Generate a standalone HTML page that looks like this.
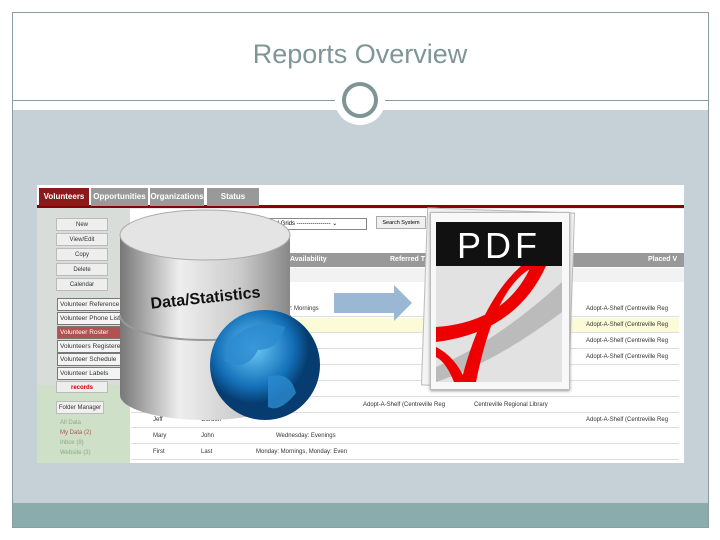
<!DOCTYPE html>
<html><head><style>
*{margin:0;padding:0;box-sizing:border-box}
body{width:720px;height:540px;background:#fff;position:relative;overflow:hidden;font-family:"Liberation Sans",sans-serif}
.a{position:absolute}
.btn{position:absolute;left:56px;width:52px;height:13px;background:#eee;border:1px solid #bbb;font-size:6px;text-align:center;line-height:12px;color:#333}
.menu{position:absolute;left:57px;width:66px;height:13px;background:#f4f4f4;border:1px solid #777;font-size:6.5px;line-height:12px;padding-left:2px;color:#333;white-space:nowrap;overflow:hidden}
.row{position:absolute;left:131px;width:548px;height:15px;border-bottom:1px solid #ddd;font-size:6px;line-height:15px;color:#333}
.row span{position:absolute}
</style></head><body>
<div class="a" style="left:12px;top:12px;width:697px;height:516px;border:1px solid #8a9e9e"></div>
<div class="a" style="left:13px;top:110px;width:695px;height:393px;background:#c6d1d7"></div>
<div class="a" style="left:13px;top:503px;width:695px;height:24px;background:#8aacac"></div>
<div class="a" style="left:13px;top:100px;width:695px;height:1px;background:#8a9e9e"></div>
<div class="a" style="left:0;top:39px;width:720px;text-align:center;font-size:27px;color:#7f9696">Reports Overview</div>
<div class="a" style="left:335px;top:77px;width:50px;height:48px;border-radius:50%;background:#fff"></div>
<div class="a" style="left:342px;top:82px;width:36px;height:36px;border-radius:50%;border:4px solid #7f9494;background:#fff"></div>

<div class="a" style="left:37px;top:185px;width:647px;height:278px;background:#fff;overflow:hidden">
 <div class="a" style="left:0;top:20px;width:647px;height:3px;background:#8b0000"></div>
 <div class="a" style="left:2px;top:3px;width:50px;height:18px;background:#8b1a1a;color:#fff;font-size:8px;font-weight:bold;line-height:18px;text-align:center">Volunteers</div>
 <div class="a" style="left:54px;top:3px;width:57px;height:18px;background:#999;color:#fff;font-size:8px;font-weight:bold;line-height:18px;text-align:center">Opportunities</div>
 <div class="a" style="left:113px;top:3px;width:54px;height:18px;background:#999;color:#fff;font-size:8px;font-weight:bold;line-height:18px;text-align:center">Organizations</div>
 <div class="a" style="left:170px;top:3px;width:52px;height:18px;background:#999;color:#fff;font-size:8px;font-weight:bold;line-height:18px;text-align:center">Status</div>
 <div class="a" style="left:0;top:23px;width:93px;height:255px;background:#d9ddd9"></div>
 <div class="a" style="left:0;top:200px;width:93px;height:78px;background:#cfe0c8"></div>
 <div class="a" style="left:93px;top:23px;width:554px;height:255px;background:#e8e8e8"></div>
</div>
<div class="btn" style="top:218px">New</div>
<div class="btn" style="top:233px">View/Edit</div>
<div class="btn" style="top:248px">Copy</div>
<div class="btn" style="top:263px">Delete</div>
<div class="btn" style="top:278px">Calendar</div>
<div class="menu" style="top:298px">Volunteer Reference</div>
<div class="menu" style="top:312px">Volunteer Phone List</div>
<div class="menu" style="top:326px;background:#b35050;color:#fff">Volunteer Roster</div>
<div class="menu" style="top:340px">Volunteers Registered</div>
<div class="menu" style="top:353px">Volunteer Schedule</div>
<div class="menu" style="top:367px">Volunteer Labels</div>
<div class="btn" style="top:381px;color:#c00;font-weight:bold;height:12px">records</div>
<div class="btn" style="top:401px;left:56px;width:48px;height:13px;background:#f0f0f0">Folder Manager</div>
<div class="a" style="left:60px;top:418px;font-size:6px;color:#8a8;line-height:10px">All Data<br><span style="color:#a55">My Data (2)</span><br>Inbox (8)<br>Website (3)</div>
<div class="a" style="left:130px;top:209px;width:554px;height:254px;background:#fff"></div>
<div class="a" style="left:376px;top:216px;width:50px;height:13px;background:#f0f0f0;border:1px solid #aaa;font-size:5.5px;line-height:12px;text-align:center">Search System</div>
<div class="a" style="left:265px;top:218px;width:102px;height:12px;border:1px solid #888;background:#fff;font-size:6px;line-height:11px;padding-left:2px">wed Grids ----------------- ⌄</div>
<div class="a" style="left:130px;top:253px;width:554px;height:14px;background:#999;color:#fff;font-size:7px;font-weight:bold;line-height:14px"><span class="a" style="left:160px">Availability</span><span class="a" style="left:260px">Referred T</span><span class="a" style="left:518px">Placed V</span></div>
<div class="a" style="left:130px;top:268px;width:554px;height:14px;background:#f2f2f2"></div>
<div class="row" style="top:302px"><span style="left:150px">day: Mornings</span><span style="left:455px">Adopt-A-Shelf (Centreville Reg</span></div>
<div class="row" style="top:318px;background:#fbfbd8"><span style="left:455px">Adopt-A-Shelf (Centreville Reg</span></div>
<div class="row" style="top:334px"><span style="left:455px">Adopt-A-Shelf (Centreville Reg</span></div>
<div class="row" style="top:350px"><span style="left:160px">Friday: Mo</span><span style="left:455px">Adopt-A-Shelf (Centreville Reg</span></div>
<div class="row" style="top:366px"></div>
<div class="row" style="top:382px"></div>
<div class="row" style="top:398px"><span style="left:232px">Adopt-A-Shelf (Centreville Reg</span><span style="left:343px">Centreville Regional Library</span></div>
<div class="row" style="top:413px"><span style="left:22px">Jeff</span><span style="left:70px">Gordon</span><span style="left:455px">Adopt-A-Shelf (Centreville Reg</span></div>
<div class="row" style="top:429px"><span style="left:22px">Mary</span><span style="left:70px">John</span><span style="left:145px">Wednesday: Evenings</span></div>
<div class="row" style="top:445px"><span style="left:22px">First</span><span style="left:70px">Last</span><span style="left:125px">Monday: Mornings, Monday: Even</span></div>

<svg class="a" style="left:110px;top:205px" width="230" height="225">
<defs><linearGradient id="g" x1="0" x2="1"><stop offset="0" stop-color="#777"/><stop offset=".35" stop-color="#eee"/><stop offset=".7" stop-color="#ccc"/><stop offset="1" stop-color="#888"/></linearGradient>
<radialGradient id="b" cx=".4" cy=".35"><stop offset="0" stop-color="#6cc8f5"/><stop offset=".7" stop-color="#1470b8"/><stop offset="1" stop-color="#063c70"/></radialGradient></defs>
<path d="M10 30 L10 190 A85 25 0 0 0 180 190 L180 30 Z" fill="url(#g)"/>
<ellipse cx="95" cy="30" rx="85" ry="25" fill="#e4e4e4" stroke="#aaa"/>
<path d="M10 110 A85 25 0 0 0 180 110" fill="none" stroke="#999" stroke-width="2"/>
<text x="40" y="98" font-size="16" font-weight="bold" fill="#111" transform="rotate(-6 95 90)">Data/Statistics</text>
<circle cx="155" cy="160" r="55" fill="url(#b)"/>
<path d="M120 135 Q145 112 175 122 Q168 145 148 145 Q136 168 114 156 Z M158 172 Q180 165 186 188 Q170 208 158 202 Z" fill="#2a8bd0" opacity=".8"/>
</svg>
<svg class="a" style="left:334px;top:283px" width="80" height="40"><path d="M0 10 H60 V2 L78 20 L60 38 V30 H0 Z" fill="#9ab8d4"/></svg>
<div class="a" style="left:424px;top:210px;width:148px;height:178px;background:#f4f4f4;border:1px solid #bbb;transform:rotate(2deg)"></div>
<div class="a" style="left:430px;top:212px;width:140px;height:178px;background:#f8f8f8;border:1px solid #bbb;box-shadow:0 1px 3px #999"></div>
<svg class="a" style="left:436px;top:222px" width="126" height="160">
<rect width="126" height="160" fill="#e2e2e2"/><rect width="126" height="44" fill="#111"/>
<text x="63" y="36" font-size="36" fill="#fff" text-anchor="middle" font-family="Liberation Sans" letter-spacing="4">PDF</text>
<path d="M0 145 Q60 120 126 60 L126 90 Q60 140 0 160Z" fill="#bbb"/>
<path d="M0 120 Q80 110 110 44 L95 44 Q70 100 0 105Z" fill="#e00"/>
<path d="M40 160 Q60 60 100 44 L85 44 Q45 80 25 160Z" fill="#e00"/>
<path d="M0 125 Q20 135 30 160 L18 160 Q10 140 0 135Z" fill="#e00"/>
</svg>
</body></html>
